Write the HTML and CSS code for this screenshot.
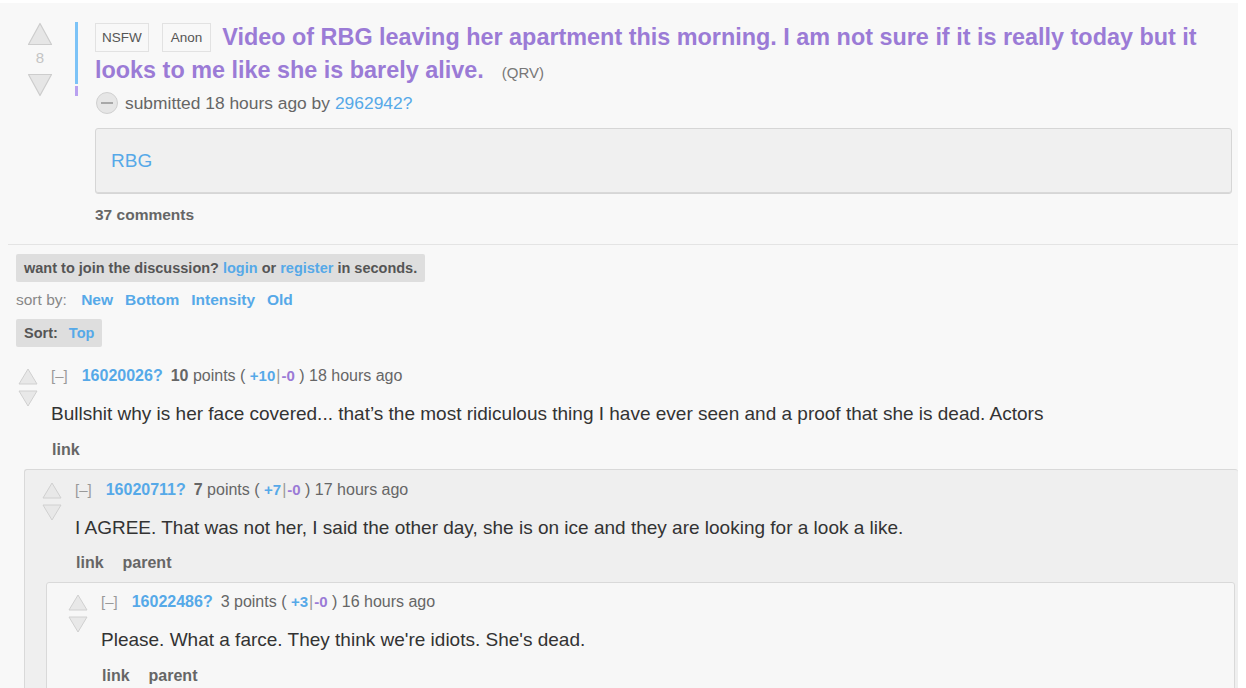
FILE: index.html
```html
<!DOCTYPE html>
<html>
<head>
<meta charset="utf-8">
<link rel="stylesheet" href="styles.css">
</head>
<body>
<div class="page">
  <div class="post">
    <div class="midcol">
      <svg class="arrow-big" width="26" height="24" viewBox="0 0 26 24"><path d="M13 1.5 L24.5 22.5 H1.5 Z" fill="#e6e6e6" stroke="#cdcdcd" stroke-width="1.2" stroke-linejoin="round"/></svg>
      <div class="score">8</div>
      <svg class="arrow-big" width="26" height="24" viewBox="0 0 26 24"><path d="M13 22.5 L24.5 1.5 H1.5 Z" fill="#e6e6e6" stroke="#cdcdcd" stroke-width="1.2" stroke-linejoin="round"/></svg>
    </div>
    <div class="rail"><span class="rail-blue"></span><span class="rail-purple"></span></div>
    <div class="post-body">
      <p class="title"><span class="tag">NSFW</span><span class="tag anon">Anon</span><a class="title-link"><span>Video of RBG leaving her apartment this morning. I am not sure if it is really today but it</span> <span>looks to me like she is barely alive.</span></a><span class="domain">(QRV)</span></p>
      <p class="tagline"><span class="expando-btn"><span class="dash"></span></span>submitted 18 hours ago by <a class="blue">2962942?</a></p>
      <div class="usertext"><a class="blue">RBG</a></div>
      <div class="comments-count">37 comments</div>
    </div>
  </div>
  <hr class="sep">
  <div class="area">
    <div class="panel join">want to join the discussion? <a class="blue">login</a> or <a class="blue">register</a> in seconds.</div>
    <div class="sortby">sort by: <a>New</a><a>Bottom</a><a>Intensity</a><a>Old</a></div>
    <div class="panel sortsel">Sort: <a class="blue">Top</a></div>

    <div class="comment top">
      <div class="votes">
        <svg width="20" height="17" viewBox="0 0 20 17"><path d="M10 1 L19 16 H1 Z" fill="#e8e8e8" stroke="#d0d0d0" stroke-width="1" stroke-linejoin="round"/></svg>
        <svg width="20" height="17" viewBox="0 0 20 17"><path d="M10 16 L19 1 H1 Z" fill="#e8e8e8" stroke="#d0d0d0" stroke-width="1" stroke-linejoin="round"/></svg>
      </div>
      <div class="entry">
        <div class="meta"><span class="toggle">[–]</span><a class="author">16020026?</a><b>10</b> points ( <span class="up">+10</span><span class="bar">|</span><span class="down">-0</span> ) 18 hours ago</div>
        <div class="text">Bullshit why is her face covered... that’s the most ridiculous thing I have ever seen and a proof that she is dead. Actors</div>
        <div class="buttons"><a>link</a></div>
      </div>
    </div>
    <div class="child lvl1">
      <div class="comment">
        <div class="votes">
          <svg width="20" height="17" viewBox="0 0 20 17"><path d="M10 1 L19 16 H1 Z" fill="#e8e8e8" stroke="#d0d0d0" stroke-width="1" stroke-linejoin="round"/></svg>
          <svg width="20" height="17" viewBox="0 0 20 17"><path d="M10 16 L19 1 H1 Z" fill="#e8e8e8" stroke="#d0d0d0" stroke-width="1" stroke-linejoin="round"/></svg>
        </div>
        <div class="entry">
          <div class="meta"><span class="toggle">[–]</span><a class="author">16020711?</a><b>7</b> points ( <span class="up">+7</span><span class="bar">|</span><span class="down">-0</span> ) 17 hours ago</div>
          <div class="text">I AGREE. That was not her, I said the other day, she is on ice and they are looking for a look a like.</div>
          <div class="buttons"><a>link</a><a>parent</a></div>
        </div>
      </div>
      <div class="child lvl2">
        <div class="comment">
          <div class="votes">
            <svg width="20" height="17" viewBox="0 0 20 17"><path d="M10 1 L19 16 H1 Z" fill="#e8e8e8" stroke="#d0d0d0" stroke-width="1" stroke-linejoin="round"/></svg>
            <svg width="20" height="17" viewBox="0 0 20 17"><path d="M10 16 L19 1 H1 Z" fill="#e8e8e8" stroke="#d0d0d0" stroke-width="1" stroke-linejoin="round"/></svg>
          </div>
          <div class="entry">
            <div class="meta"><span class="toggle">[–]</span><a class="author">16022486?</a>3 points ( <span class="up">+3</span><span class="bar">|</span><span class="down">-0</span> ) 16 hours ago</div>
            <div class="text">Please. What a farce. They think we're idiots. She's dead.</div>
            <div class="buttons"><a>link</a><a>parent</a></div>
          </div>
        </div>
      </div>
    </div>
  </div>
</div>
</body>
</html>
```

FILE: styles.css
```css
html, body {
  margin: 0;
  padding: 0;
  background: #ffffff;
  font-family: "Liberation Sans", Arial, sans-serif;
}
.page {
  margin-top: 3px;
  width: 1238px;
  height: 685px;
  overflow: hidden;
  background: #f8f8f8;
  color: #555;
}
a { text-decoration: none; cursor: pointer; }
.blue { color: #56a9e8; }

.post {
  display: flex;
  padding: 18px 0 0 26px;
}
.midcol {
  width: 28px;
  display: flex;
  flex-direction: column;
  align-items: center;
  padding-top: 1px;
}
.arrow-big { display: block; }
.score {
  font-size: 15px;
  color: #c4c4c4;
  line-height: 24px;
  margin: 0 0 3px;
}
.rail {
  width: 3px;
  margin-left: 21px;
  padding-top: 1px;
  display: flex;
  flex-direction: column;
  gap: 2px;
}
.rail-blue { display: block; width: 3px; height: 62px; background: #7cc3f7; }
.rail-purple { display: block; width: 3px; height: 10px; background: #b9a1f0; }
.post-body {
  margin-left: 17px;
  flex: 1;
  padding-right: 6px;
}
.title {
  margin: 0;
  font-size: 23.4px;
  line-height: 33px;
  font-weight: bold;
  color: #9b7bd6;
}
.title-link { color: #9b7bd6; }
.tag {
  display: inline-block;
  vertical-align: 3px;
  font-size: 13.5px;
  font-weight: normal;
  color: #555;
  line-height: 27px;
  padding: 0 6px;
  border: 1px solid #e2e2e2;
  background: #f8f8f8;
  margin-right: 13px;
}
.tag.anon { padding: 0 8px; margin-right: 11px; }
.domain {
  font-size: 15px;
  font-weight: normal;
  color: #777;
  margin-left: 18px;
}
.tagline {
  margin: 2px 0 0;
  font-size: 17.4px;
  line-height: 24px;
  color: #666;
  display: flex;
  align-items: center;
}
.tagline a { margin-left: 5px; }
.expando-btn {
  width: 20px;
  height: 20px;
  border-radius: 50%;
  border: 1px solid #d0d0d0;
  background: #e6e6e6;
  display: inline-flex;
  align-items: center;
  justify-content: center;
  margin: 0 7px 0 1px;
}
.dash { display: block; width: 12px; height: 2px; background: #a8a8a8; }
.usertext {
  margin-top: 13px;
  height: 66px;
  box-sizing: border-box;
  border: 1px solid #d6d6d6;
  border-radius: 3px;
  background: #f0f0f0;
  box-shadow: inset 0 -1px 0 #d9d9d9;
  font-size: 19px;
  line-height: 22px;
  padding: 21px 15px;
}
.comments-count {
  margin-top: 12px;
  font-size: 15.5px;
  line-height: 18px;
  font-weight: bold;
  color: #666;
}
.sep {
  margin: 20px 0 0 8px;
  border: 0;
  border-top: 1px solid #e4e4e4;
  height: 0;
}
.area {
  padding: 9px 0 0 16px;
}
.panel {
  display: inline-block;
  background: #dedede;
  border-radius: 2px;
  font-size: 14.5px;
  font-weight: bold;
  color: #555;
  line-height: 28px;
  padding: 0 8px;
}
.sortby {
  margin-top: 4px;
  font-size: 15.5px;
  color: #888;
  line-height: 27px;
}
.sortby a {
  font-weight: bold;
  color: #56a9e8;
  margin-left: 12px;
}
.sortby a:first-child { margin-left: 10px; }
.sortsel {
  display: block;
  width: fit-content;
  margin-top: 6px;
  padding: 0 8px 0 8px;
}
.sortsel a { margin-left: 7px; }

.comment {
  display: flex;
}
.comment.top { margin-top: 18px; }
.votes {
  width: 20px;
  display: flex;
  flex-direction: column;
  gap: 5px;
  padding-top: 3px;
  margin-left: 2px;
}
.votes svg { display: block; }
.entry {
  margin-left: 13px;
}
.meta {
  font-size: 16px;
  color: #666;
  line-height: 22px;
}
.toggle { color: #999; margin-right: 14px; font-size: 15px; }
.author { color: #56a9e8; font-weight: bold; margin-right: 8px; }
.meta b { color: #666; }
.up { color: #56a9e8; font-weight: bold; font-size: 15px; }
.down { color: #9b7bd6; font-weight: bold; font-size: 15px; }
.bar { color: #999; margin: 0 1px; }
.text {
  margin-top: 15px;
  font-size: 19px;
  line-height: 24px;
  color: #333;
}
.buttons {
  margin-top: 12.5px;
  font-size: 16px;
  font-weight: bold;
  line-height: 22px;
}
.buttons a { color: #666; margin-right: 19px; }
.buttons a:first-child { margin-left: 1px; }

.child {
  border: 1px solid #d9d9d9;
  border-radius: 3px;
}
.lvl1 {
  margin: 8px 0 0 8px;
  background: #efefef;
  border-right: 0;
  padding: 9px 0 20px 15px;
}
.lvl2 {
  margin: 8px 3px 0 6px;
  background: #f7f7f7;
  padding: 8px 0 20px 19px;
}
```
